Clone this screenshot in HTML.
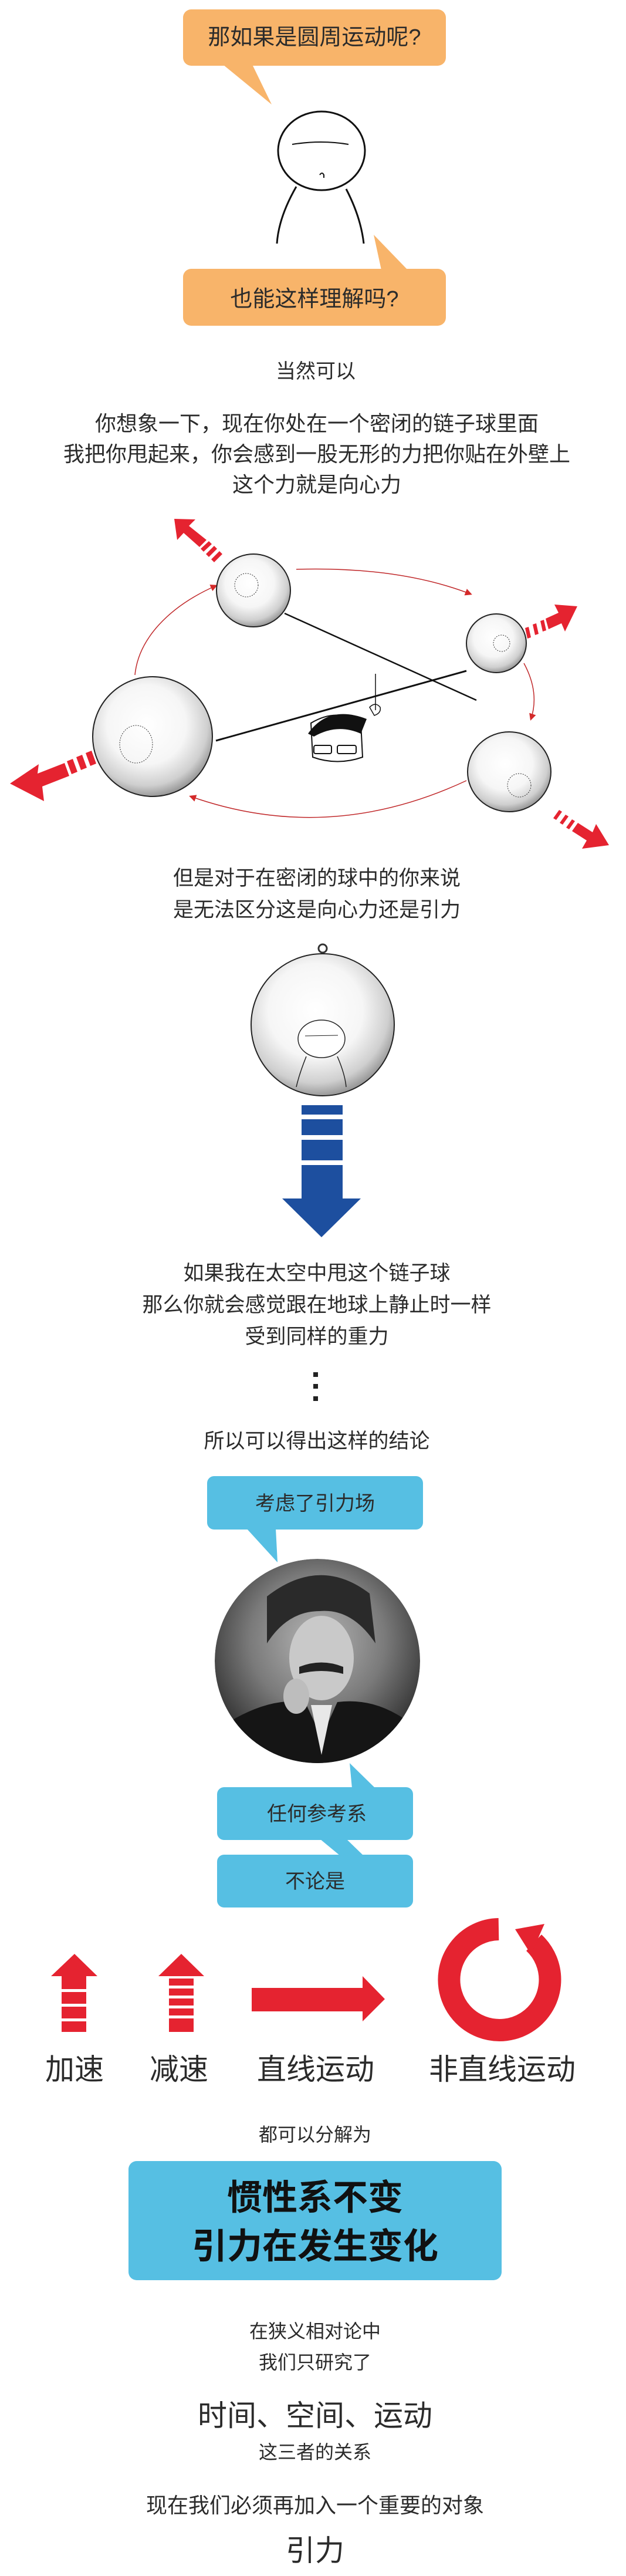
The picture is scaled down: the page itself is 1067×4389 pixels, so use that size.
<!DOCTYPE html>
<html><head><meta charset="utf-8"><style>
html,body{margin:0;padding:0;background:#fff}
svg{display:block}
text{font-family:"Liberation Sans","Noto Sans CJK SC",sans-serif;fill:#2b2b2b;text-anchor:middle}
</style></head><body>
<svg width="1067" height="4389" viewBox="0 0 1067 4389" xmlns="http://www.w3.org/2000/svg">
<defs>
<radialGradient id="ball" cx="0.45" cy="0.4" r="0.6">
<stop offset="0" stop-color="#ffffff"/><stop offset="0.55" stop-color="#f6f6f6"/><stop offset="0.85" stop-color="#cfcfcf"/><stop offset="1" stop-color="#9a9a9a"/>
</radialGradient>
<radialGradient id="ein" cx="0.5" cy="0.4" r="0.6">
<stop offset="0" stop-color="#b5b5b5"/><stop offset="0.55" stop-color="#7a7a7a"/><stop offset="1" stop-color="#2e2e2e"/>
</radialGradient>
<marker id="ah" markerWidth="8" markerHeight="8" refX="6" refY="4" orient="auto"><path d="M0,0 L8,4 L0,8 z" fill="#d42a2a"/></marker>
</defs>

<rect x="312" y="16" width="448" height="96" rx="14" fill="#f8b46a"/>
<path d="M380,110 L463,178 L430,110 z" fill="#f8b46a"/>
<text x="536" y="76" font-size="38">那如果是圆周运动呢?</text>

<ellipse cx="548" cy="257" rx="74" ry="67" fill="none" stroke="#111" stroke-width="3"/>
<path d="M498,246 Q548,238 594,246" fill="none" stroke="#111" stroke-width="2"/>
<path d="M545,298 q4,-6 7,0 l0,5" fill="none" stroke="#111" stroke-width="2"/>
<path d="M505,318 Q475,370 472,415" fill="none" stroke="#111" stroke-width="3"/>
<path d="M590,322 Q615,370 620,415" fill="none" stroke="#111" stroke-width="3"/>

<rect x="312" y="458" width="448" height="97" rx="14" fill="#f8b46a"/>
<path d="M637,400 L695,460 L650,460 z" fill="#f8b46a"/>
<text x="536" y="522" font-size="38">也能这样理解吗?</text>

<text x="538" y="644" font-size="34">当然可以</text>
<text x="540" y="734" font-size="36">你想象一下，现在你处在一个密闭的链子球里面</text>
<text x="540" y="786" font-size="36">我把你甩起来，你会感到一股无形的力把你贴在外壁上</text>
<text x="540" y="838" font-size="36">这个力就是向心力</text>

<path d="M230,1150 A344,204 0 0 1 368,998" fill="none" stroke="#c0282a" stroke-width="1.5" marker-end="url(#ah)"/>
<path d="M505,970 Q680,965 802,1012" fill="none" stroke="#c0282a" stroke-width="1.5" marker-end="url(#ah)"/>
<path d="M893,1130 Q920,1180 905,1225" fill="none" stroke="#c0282a" stroke-width="1.5" marker-end="url(#ah)"/>
<path d="M795,1330 Q560,1440 325,1357" fill="none" stroke="#c0282a" stroke-width="1.5" marker-end="url(#ah)"/>

<line x1="485" y1="1045" x2="812" y2="1193" stroke="#111" stroke-width="2.5"/>
<line x1="368" y1="1262" x2="795" y2="1143" stroke="#111" stroke-width="3"/>
<line x1="640" y1="1148" x2="640" y2="1210" stroke="#111" stroke-width="1.5"/>

<ellipse cx="432" cy="1006" rx="63" ry="62" fill="url(#ball)" stroke="#222" stroke-width="2"/>
<circle cx="420" cy="997" r="20" fill="none" stroke="#333" stroke-dasharray="2 2"/>
<ellipse cx="846" cy="1096" rx="51" ry="50" fill="url(#ball)" stroke="#222" stroke-width="2"/>
<circle cx="855" cy="1096" r="14" fill="none" stroke="#333" stroke-dasharray="2 2"/>
<ellipse cx="260" cy="1255" rx="102" ry="102" fill="url(#ball)" stroke="#222" stroke-width="2"/>
<ellipse cx="232" cy="1268" rx="28" ry="32" fill="none" stroke="#333" stroke-dasharray="2 2"/>
<ellipse cx="868" cy="1315" rx="71" ry="68" fill="url(#ball)" stroke="#222" stroke-width="2"/>
<circle cx="885" cy="1338" r="20" fill="none" stroke="#333" stroke-dasharray="2 2"/>

<path d="M530,1232 Q575,1205 615,1232 L618,1290 Q575,1305 533,1290 z" fill="#fff" stroke="#111" stroke-width="2"/>
<path d="M525,1250 Q560,1200 625,1225 L615,1250 Q575,1232 535,1255 z" fill="#111"/>
<rect x="535" y="1270" width="30" height="14" rx="3" fill="none" stroke="#111" stroke-width="2"/>
<rect x="575" y="1270" width="32" height="14" rx="3" fill="none" stroke="#111" stroke-width="2"/>
<path d="M630,1205 q10,-10 18,0 q2,10 -10,14 z" fill="none" stroke="#111" stroke-width="1.5"/>

<g fill="#e52330">
<polygon points="297,884 333,885 322,896 352,920 340,932 313,908 302,920"/>
<polygon points="342,935 356,922 361,927 347,940"/><polygon points="351,944 365,930 370,935 356,949"/><polygon points="360,953 374,939 379,944 365,958"/>
<polygon points="984,1033 963,1076 957,1062 935,1072 930,1054 952,1044 945,1030"/>
<polygon points="927,1056 931,1074 925,1076 921,1058"/><polygon points="914,1062 918,1080 912,1082 908,1064"/><polygon points="901,1068 905,1086 899,1088 895,1070"/>
<polygon points="17,1335 66,1302 64,1318 110,1300 118,1322 72,1340 75,1365"/>
<polygon points="114,1297 122,1319 132,1315 124,1293"/><polygon points="130,1290 138,1312 148,1308 140,1286"/><polygon points="146,1283 154,1305 164,1301 156,1279"/>
<polygon points="1038,1440 992,1446 1000,1432 975,1416 985,1402 1010,1418 1016,1404"/>
<polygon points="970,1413 980,1399 975,1396 965,1410"/><polygon points="959,1405 969,1391 964,1388 954,1402"/><polygon points="948,1397 958,1383 953,1380 943,1394"/>
</g>

<text x="540" y="1508" font-size="35">但是对于在密闭的球中的你来说</text>
<text x="540" y="1562" font-size="35">是无法区分这是向心力还是引力</text>

<circle cx="550" cy="1616" r="7" fill="none" stroke="#333" stroke-width="3"/>
<ellipse cx="550" cy="1746" rx="122" ry="121" fill="url(#ball)" stroke="#222" stroke-width="2"/>
<ellipse cx="548" cy="1770" rx="40" ry="32" fill="#fff" stroke="#222" stroke-width="1.5"/>
<line x1="520" y1="1765" x2="576" y2="1764" stroke="#222"/>
<path d="M522,1800 Q510,1830 505,1852 M575,1800 Q588,1830 590,1852" fill="none" stroke="#222" stroke-width="1.5"/>

<g fill="#1d4f9f">
<rect x="514" y="1883" width="70" height="16"/><rect x="514" y="1907" width="70" height="27"/><rect x="514" y="1942" width="70" height="35"/><rect x="514" y="1985" width="70" height="58"/>
<polygon points="481,2042 615,2042 548,2108"/>
</g>

<text x="540" y="2181" font-size="35">如果我在太空中甩这个链子球</text>
<text x="540" y="2235" font-size="35">那么你就会感觉跟在地球上静止时一样</text>
<text x="540" y="2289" font-size="35">受到同样的重力</text>
<rect x="534" y="2338" width="8" height="8" fill="#222"/><rect x="534" y="2358" width="8" height="8" fill="#222"/><rect x="534" y="2379" width="8" height="8" fill="#222"/>
<text x="540" y="2467" font-size="35">所以可以得出这样的结论</text>

<rect x="353" y="2515" width="368" height="91" rx="12" fill="#56bfe3"/>
<path d="M420,2604 L473,2662 L470,2604 z" fill="#56bfe3"/>
<text x="537" y="2573" font-size="34">考虑了引力场</text>

<clipPath id="ec"><ellipse cx="541" cy="2830" rx="175" ry="174"/></clipPath>
<g clip-path="url(#ec)">
<ellipse cx="541" cy="2830" rx="175" ry="174" fill="url(#ein)"/>
<path d="M455,2720 Q545,2650 630,2715 L640,2800 Q600,2740 545,2745 Q490,2745 455,2800 z" fill="#2a2a2a"/>
<ellipse cx="548" cy="2825" rx="55" ry="72" fill="#c9c9c9"/>
<path d="M510,2840 Q548,2825 585,2840 L585,2852 Q548,2842 510,2852 z" fill="#222"/>
<path d="M366,2950 Q450,2890 520,2900 L548,2960 L575,2900 Q650,2890 716,2950 L716,3010 L366,3010 z" fill="#151515"/>
<path d="M530,2905 L548,2990 L566,2905 z" fill="#e8e8e8"/>
<ellipse cx="505" cy="2890" rx="22" ry="30" fill="#bdbdbd"/>
</g>

<rect x="370" y="3045" width="334" height="90" rx="12" fill="#56bfe3"/>
<path d="M596,3004 L640,3047 L600,3047 z" fill="#56bfe3"/>
<text x="540" y="3102" font-size="34">任何参考系</text>
<path d="M545,3133 L580,3162 L620,3162 L590,3133 z" fill="#56bfe3"/>
<rect x="370" y="3160" width="334" height="90" rx="12" fill="#56bfe3"/>
<text x="537" y="3217" font-size="34">不论是</text>

<g fill="#e52330">
<polygon points="87,3367 127,3329 166,3367"/>
<rect x="105" y="3367" width="42" height="22"/><rect x="105" y="3394" width="42" height="20"/><rect x="105" y="3419" width="42" height="20"/><rect x="105" y="3444" width="42" height="18"/>
<polygon points="270,3367 309,3329 348,3367"/>
<rect x="288" y="3371" width="42" height="12"/><rect x="288" y="3388" width="42" height="12"/><rect x="288" y="3405" width="42" height="12"/><rect x="288" y="3422" width="42" height="12"/><rect x="288" y="3439" width="42" height="23"/>
<rect x="429" y="3387" width="190" height="40"/>
<polygon points="618,3367 656,3406 618,3444"/>
</g>
<path d="M850,3287 A86,86 0 1 0 910,3310" fill="none" stroke="#e52330" stroke-width="38"/>
<polygon points="928,3278 878,3287 905,3330" fill="#e52330"/>

<text x="127" y="3543" font-size="50">加速</text>
<text x="305" y="3543" font-size="50">减速</text>
<text x="538" y="3543" font-size="50">直线运动</text>
<text x="856" y="3543" font-size="50">非直线运动</text>

<text x="537" y="3648" font-size="32">都可以分解为</text>
<rect x="219" y="3682" width="636" height="203" rx="14" fill="#56bfe3"/>
<text x="537" y="3765" font-size="60" font-weight="bold" style="fill:#111">惯性系不变</text>
<text x="537" y="3848" font-size="60" font-weight="bold" style="fill:#111">引力在发生变化</text>

<text x="537" y="3983" font-size="32">在狭义相对论中</text>
<text x="537" y="4036" font-size="32">我们只研究了</text>
<text x="537" y="4133" font-size="50">时间、空间、运动</text>
<text x="537" y="4189" font-size="32">这三者的关系</text>
<text x="537" y="4281" font-size="36">现在我们必须再加入一个重要的对象</text>
<text x="537" y="4363" font-size="50">引力</text>
</svg>
</body></html>
